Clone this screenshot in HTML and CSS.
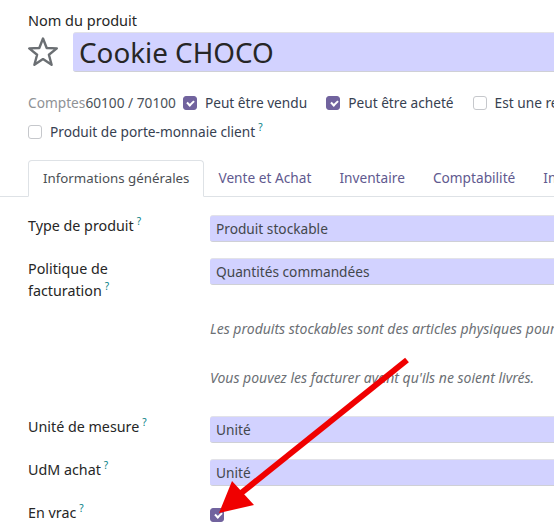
FILE: index.html
```html
<!DOCTYPE html>
<html lang="fr">

<head>
  <meta charset="UTF-8">
  <meta name="viewport" content="width=device-width, initial-scale=1.0">
  <title>Cookie CHOCO</title>

  <link rel="stylesheet" href="styles.css">

</head>

<body>

  <div id="sheet">
    <div class="name-label">Nom du produit</div>
    <div class="title-row">
      <svg class="star" width="32" height="32" viewBox="0 0 32 32">
        <polygon points="16,2.5 19.7,12 29.8,12.4 21.9,18.8 24.6,28.8 16,23.1 7.4,28.8 10.1,18.8 2.2,12.4 12.3,12"
          fill="none" stroke="#6b6f73" stroke-width="2.4" stroke-linejoin="round" />
      </svg>
      <div class="title-input">Cookie CHOCO</div>
    </div>

    <!-- options -->
    <div class="opts">
      <span class="accounts"><span class="muted">Comptes</span>60100 / 70100</span>
      <span class="chk on"></span><span class="opt-text">Peut être vendu</span>
      <span class="chk on"></span><span class="opt-text">Peut être acheté</span>
      <span class="chk"></span><span class="opt-text">Est une ressource</span>
    </div>
    <div class="opts second">
      <span class="chk"></span><span class="opt-text">Produit de porte-monnaie client<sup>?</sup></span>
    </div>

    <!-- onglets -->
    <nav class="tabs">
      <div class="tab active">Informations générales</div>
      <div class="tab">Vente et Achat</div>
      <div class="tab">Inventaire</div>
      <div class="tab">Comptabilité</div>
      <div class="tab">Informations</div>
    </nav>

    <section class="fields">
      <div class="label">Type de produit<sup>?</sup></div>
      <div class="input">Produit stockable</div>

      <div class="label">Politique de<br>facturation<sup>?</sup></div>
      <div class="input">Quantités commandées</div>

      <div></div>
      <div class="hint">
        <p>Les produits stockables sont des articles physiques pour lesquels vous gérez le stock.</p>
        <p>Vous pouvez les facturer avant qu'ils ne soient livrés.</p>
      </div>

      <div class="label">Unité de mesure<sup>?</sup></div>
      <div class="input">Unité</div>

      <div class="label">UdM achat<sup>?</sup></div>
      <div class="input">Unité</div>

      <div class="label">En vrac<sup>?</sup></div>
      <div class="chk-cell"><span class="chk on"></span></div>
    </section>
  </div>

  <!-- flèche d'annotation -->
  <svg class="arrow" width="554" height="530" viewBox="0 0 554 530">
    <line x1="407" y1="360" x2="240" y2="494" stroke="#f00000" stroke-width="6" />
    <polygon points="219,513 232,481 254,505" fill="#f00000" />
  </svg>

</body>

</html>
```

FILE: styles.css
```css
* {
  margin: 0;
  padding: 0;
  box-sizing: border-box;
}

body {
  width: 554px;
  height: 530px;
  overflow: hidden;
  background: #fff;
  font-family: "Noto Sans", sans-serif;
  font-size: 13.7px;
  color: #262626;
}

#sheet {
  width: 640px;
  padding-left: 28px;
}

sup {
  font-size: 10px;
  color: #017e84;
  margin-left: 3px;
  vertical-align: 6px;
  line-height: 0;
}

.name-label {
  padding-top: 10px;
  font-size: 14.5px;
  line-height: 20px;
}

.title-row {
  display: flex;
  align-items: center;
  margin-top: 2px;
  height: 40px;
}

.star {
  margin-left: -1px;
  margin-right: 14px;
}

.title-input {
  flex: 1;
  height: 40px;
  background: #d2d2ff;
  border-top: 1px solid #e2e2e8;
  border-bottom: 1px solid #cfd0d6;
  border-radius: 3px 0 0 3px;
  font-size: 27.8px;
  line-height: 38px;
  padding-left: 6px;
  color: #262626;
}

.opts {
  display: flex;
  align-items: center;
  margin-top: 21px;
  line-height: 20px;
  white-space: nowrap;
}

.opts.second {
  margin-top: 9px;
}

.accounts {
  color: #495057;
  margin-right: 7px;
}

.muted {
  color: #8f9296;
}

.opt-text {
  margin-left: 8px;
  margin-right: 19px;
  color: #374151;
}

.chk {
  display: inline-block;
  width: 14px;
  height: 14px;
  border: 1px solid #c6c8cc;
  border-radius: 3px;
  background: #fff;
  flex: none;
  position: relative;
}

.chk.on {
  background: #71639e;
  border-color: #71639e;
}

.chk.on::after {
  content: "";
  position: absolute;
  left: 3.5px;
  top: 2.5px;
  width: 5px;
  height: 3px;
  border-left: 2px solid #fff;
  border-bottom: 2px solid #fff;
  transform: rotate(-45deg);
}

.tabs {
  display: flex;
  margin-top: 18px;
  margin-left: -28px;
  padding-left: 28px;
  border-bottom: 1px solid #dee2e6;
  height: 37px;
  white-space: nowrap;
}

.tab {
  padding: 0 14px;
  line-height: 36px;
  color: #5f5a8f;
}

.tab.active {
  color: #4b4f54;
  font-size: 13.3px;
  border: 1px solid #dee2e6;
  border-bottom: 1px solid #fff;
  border-radius: 4px 4px 0 0;
  background: #fff;
  height: 37px;
  line-height: 35px;
}

.fields {
  display: grid;
  grid-template-columns: 182px 1fr;
  row-gap: 16px;
  margin-top: 18px;
}

.label {
  font-size: 14.3px;
  line-height: 22px;
}

.input {
  height: 27px;
  background: #d2d2ff;
  border-top: 1px solid #e2e2e8;
  border-bottom: 1px solid #cfd0d6;
  border-radius: 3px 0 0 3px;
  padding-left: 6px;
  line-height: 25px;
  color: #43474c;
}

.hint {
  font-style: italic;
  font-size: 14px;
  color: #6c7075;
  white-space: nowrap;
  margin-top: 1px;
  margin-bottom: 12px;
}

.hint p {
  line-height: 20px;
}

.hint p + p {
  margin-top: 29px;
}

.chk-cell {
  padding-top: 5px;
}

.arrow {
  position: absolute;
  left: 0;
  top: 0;
  pointer-events: none;
}
```
